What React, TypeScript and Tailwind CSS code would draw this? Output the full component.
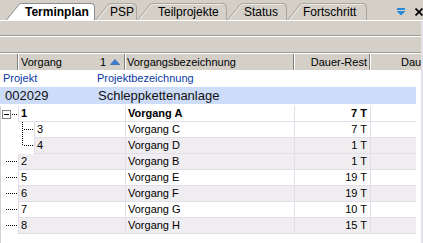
import type { FC } from 'react';

type Tree = 'root' | 'leaf' | 'mid' | 'last';

type Task = {
  id: string;
  name: string;
  rest: string;
  tree: Tree;
  shade: boolean;
  bold?: boolean;
};

const tabs = [
  { label: 'Terminplan', active: true, className: 'w-[89px] pl-[19px]' },
  { label: 'PSP', className: 'w-[42px] pl-[15px]' },
  { label: 'Teilprojekte', className: 'w-[90px] pl-[21px]' },
  { label: 'Status', className: 'w-[60px] pl-[17px]' },
  { label: 'Fortschritt', className: 'w-[80px] pl-[16px]' },
];

const tabWidths: Record<string, number> = {
  Terminplan: 89,
  PSP: 42,
  Teilprojekte: 90,
  Status: 60,
  Fortschritt: 80,
};

const tasks: Task[] = [
  { id: '1', name: 'Vorgang A', rest: '7 T', tree: 'root', shade: false, bold: true },
  { id: '3', name: 'Vorgang C', rest: '7 T', tree: 'mid', shade: false },
  { id: '4', name: 'Vorgang D', rest: '1 T', tree: 'last', shade: true },
  { id: '2', name: 'Vorgang B', rest: '1 T', tree: 'leaf', shade: true },
  { id: '5', name: 'Vorgang E', rest: '19 T', tree: 'leaf', shade: false },
  { id: '6', name: 'Vorgang F', rest: '19 T', tree: 'leaf', shade: true },
  { id: '7', name: 'Vorgang G', rest: '10 T', tree: 'leaf', shade: false },
  { id: '8', name: 'Vorgang H', rest: '15 T', tree: 'leaf', shade: true },
];

const Tab: FC<{ label: string; active?: boolean; className: string }> = ({
  label,
  active,
  className,
}) => {
  const w = tabWidths[label];
  const d = `M0.5,17 L13,1.5 Q14,0.5 16,0.5 L${w - 4},0.5 Q${w - 0.5},0.5 ${w - 0.5},4 L${w - 0.5},17`;
  return (
    <div
      className={`relative flex h-[17px] shrink-0 items-center ${className} ${
        active ? 'z-10 font-bold' : ''
      }`}
    >
      <svg className="absolute left-0 top-0" width={w} height={17}>
        <path
          d={d}
          fill={active ? '#ffffff' : '#d4d0c8'}
          stroke={active ? '#8d8d8d' : '#a9a69f'}
        />
        {!active && (
          <path
            d={`M2.5,17 L14,2.5 Q15,1.5 16.5,1.5 L${w - 4},1.5`}
            fill="none"
            stroke="#ece9e4"
          />
        )}
      </svg>
      <span className="relative text-[12px] leading-none text-black">{label}</span>
    </div>
  );
};

const TreeLines: FC<{ kind: Tree }> = ({ kind }) => {
  const wide = kind === 'mid' || kind === 'last';
  return (
    <svg
      width={wide ? 33 : 17}
      height={16}
      className="shrink-0 bg-white"
      shapeRendering="crispEdges"
    >
      {kind === 'root' && (
        <>
          <rect x={1.5} y={4.5} width={8} height={8} fill="#fff" stroke="#808080" />
          <line x1={3} y1={8.5} x2={8} y2={8.5} stroke="#000" />
          <line x1={11} y1={8.5} x2={17} y2={8.5} stroke="#000" strokeDasharray="1 1" />
        </>
      )}
      {kind === 'leaf' && (
        <line x1={5} y1={7.5} x2={17} y2={7.5} stroke="#000" strokeDasharray="1 1" />
      )}
      {wide && (
        <>
          <line
            x1={21.5}
            y1={0}
            x2={21.5}
            y2={kind === 'mid' ? 16 : 8}
            stroke="#000"
            strokeDasharray="1 1"
          />
          <line x1={23} y1={7.5} x2={33} y2={7.5} stroke="#000" strokeDasharray="1 1" />
        </>
      )}
    </svg>
  );
};

const TaskRow: FC<{ task: Task }> = ({ task }) => {
  const bg = task.shade ? 'bg-[#efedf0]' : 'bg-white';
  const cell = `h-4 border-b border-l border-[#e2dee7] ${bg} flex items-center`;
  const wide = task.tree === 'mid' || task.tree === 'last';
  return (
    <div className={`flex h-4 ${task.bold ? 'font-bold' : ''}`}>
      <TreeLines kind={task.tree} />
      <div className={`${cell} ${wide ? 'w-[91px]' : 'w-[107px]'} pl-[2px]`}>{task.id}</div>
      <div className={`${cell} w-[169px] pl-[2px]`}>{task.name}</div>
      <div className={`${cell} w-[76px] justify-end pr-[3px]`}>{task.rest}</div>
      <div className={`${cell} w-[46px]`} />
    </div>
  );
};

const App: FC = () => {
  return (
    <div className="h-[243px] w-[423px] overflow-hidden bg-white font-['Liberation_Sans',Arial,sans-serif] text-[11px] text-black">
      {/* tab strip */}
      <div className="flex h-[21px] items-end border-b border-white bg-[#d4d0c8] pl-[6px]">
        {tabs.map((t) => (
          <Tab key={t.label} label={t.label} active={t.active} className={t.className} />
        ))}
        <div className="ml-auto flex items-center gap-[10px] self-stretch pt-[4px]">
          <svg width={8} height={8} shapeRendering="crispEdges">
            <rect x={0} y={0} width={8} height={2} fill="#2b8ad8" />
            <polygon points="0,3 8,3 4,7.5" fill="#2b8ad8" />
          </svg>
          <svg width={8} height={8}>
            <path d="M0.5,0.5 L7.5,7.5 M7.5,0.5 L0.5,7.5" stroke="#000" strokeWidth={1.7} />
          </svg>
        </div>
      </div>

      <div className="flex">
        <div className="w-[421px]">
          {/* toolbar bands */}
          <div className="h-[15px] border-b border-[#9d9a94] bg-[#d4d0c8]" />
          <div className="h-[17px] border-y border-b-[#9d9a94] border-t-white bg-[#d4d0c8]" />

          {/* column header */}
          <div className="flex h-[17px] border-t border-white bg-[#d4d0c8]">
            <div className="w-[18px] border-r border-[#808080]" />
            <div className="flex w-[107px] items-center border-r border-l border-r-[#808080] border-l-white pl-[2px] pr-[4px]">
              <span>Vorgang</span>
              <span className="ml-auto">1</span>
              <svg width={10} height={6} className="ml-[4px]">
                <polygon points="0.5,5.5 5,0.5 9.5,5.5" fill="#3d7fd6" stroke="#1d4f9a" strokeWidth={0.6} />
              </svg>
            </div>
            <div className="flex w-[169px] items-center border-r border-l border-r-[#808080] border-l-white pl-[1px]">
              Vorgangsbezeichnung
            </div>
            <div className="flex w-[76px] items-center justify-end border-r border-l border-r-[#808080] border-l-white pr-[2px]">
              Dauer-Rest
            </div>
            <div className="flex w-[51px] items-center overflow-hidden whitespace-nowrap border-l border-white pl-[30px]">
              Dauer
            </div>
          </div>

          {/* project rows */}
          <div className="flex h-[17px] items-center text-[#0b3aa5]">
            <span className="w-[97px] pl-[3px]">Projekt</span>
            <span>Projektbezeichnung</span>
          </div>
          <div className="flex h-[17px] w-[416px] items-center bg-[#cddcf8] text-[13px] text-[#111]">
            <span className="w-[98px] pl-[5px]">002029</span>
            <span>Schleppkettenanlage</span>
          </div>

          {/* tasks */}
          <div className="mt-[2px] h-[140px] border-l border-[#d4d0c8]">
            {tasks.map((t) => (
              <TaskRow key={t.id} task={t} />
            ))}
          </div>
        </div>
        <div className="w-[2px] bg-[#e4e0ea]" />
      </div>
    </div>
  );
};

export default App;
